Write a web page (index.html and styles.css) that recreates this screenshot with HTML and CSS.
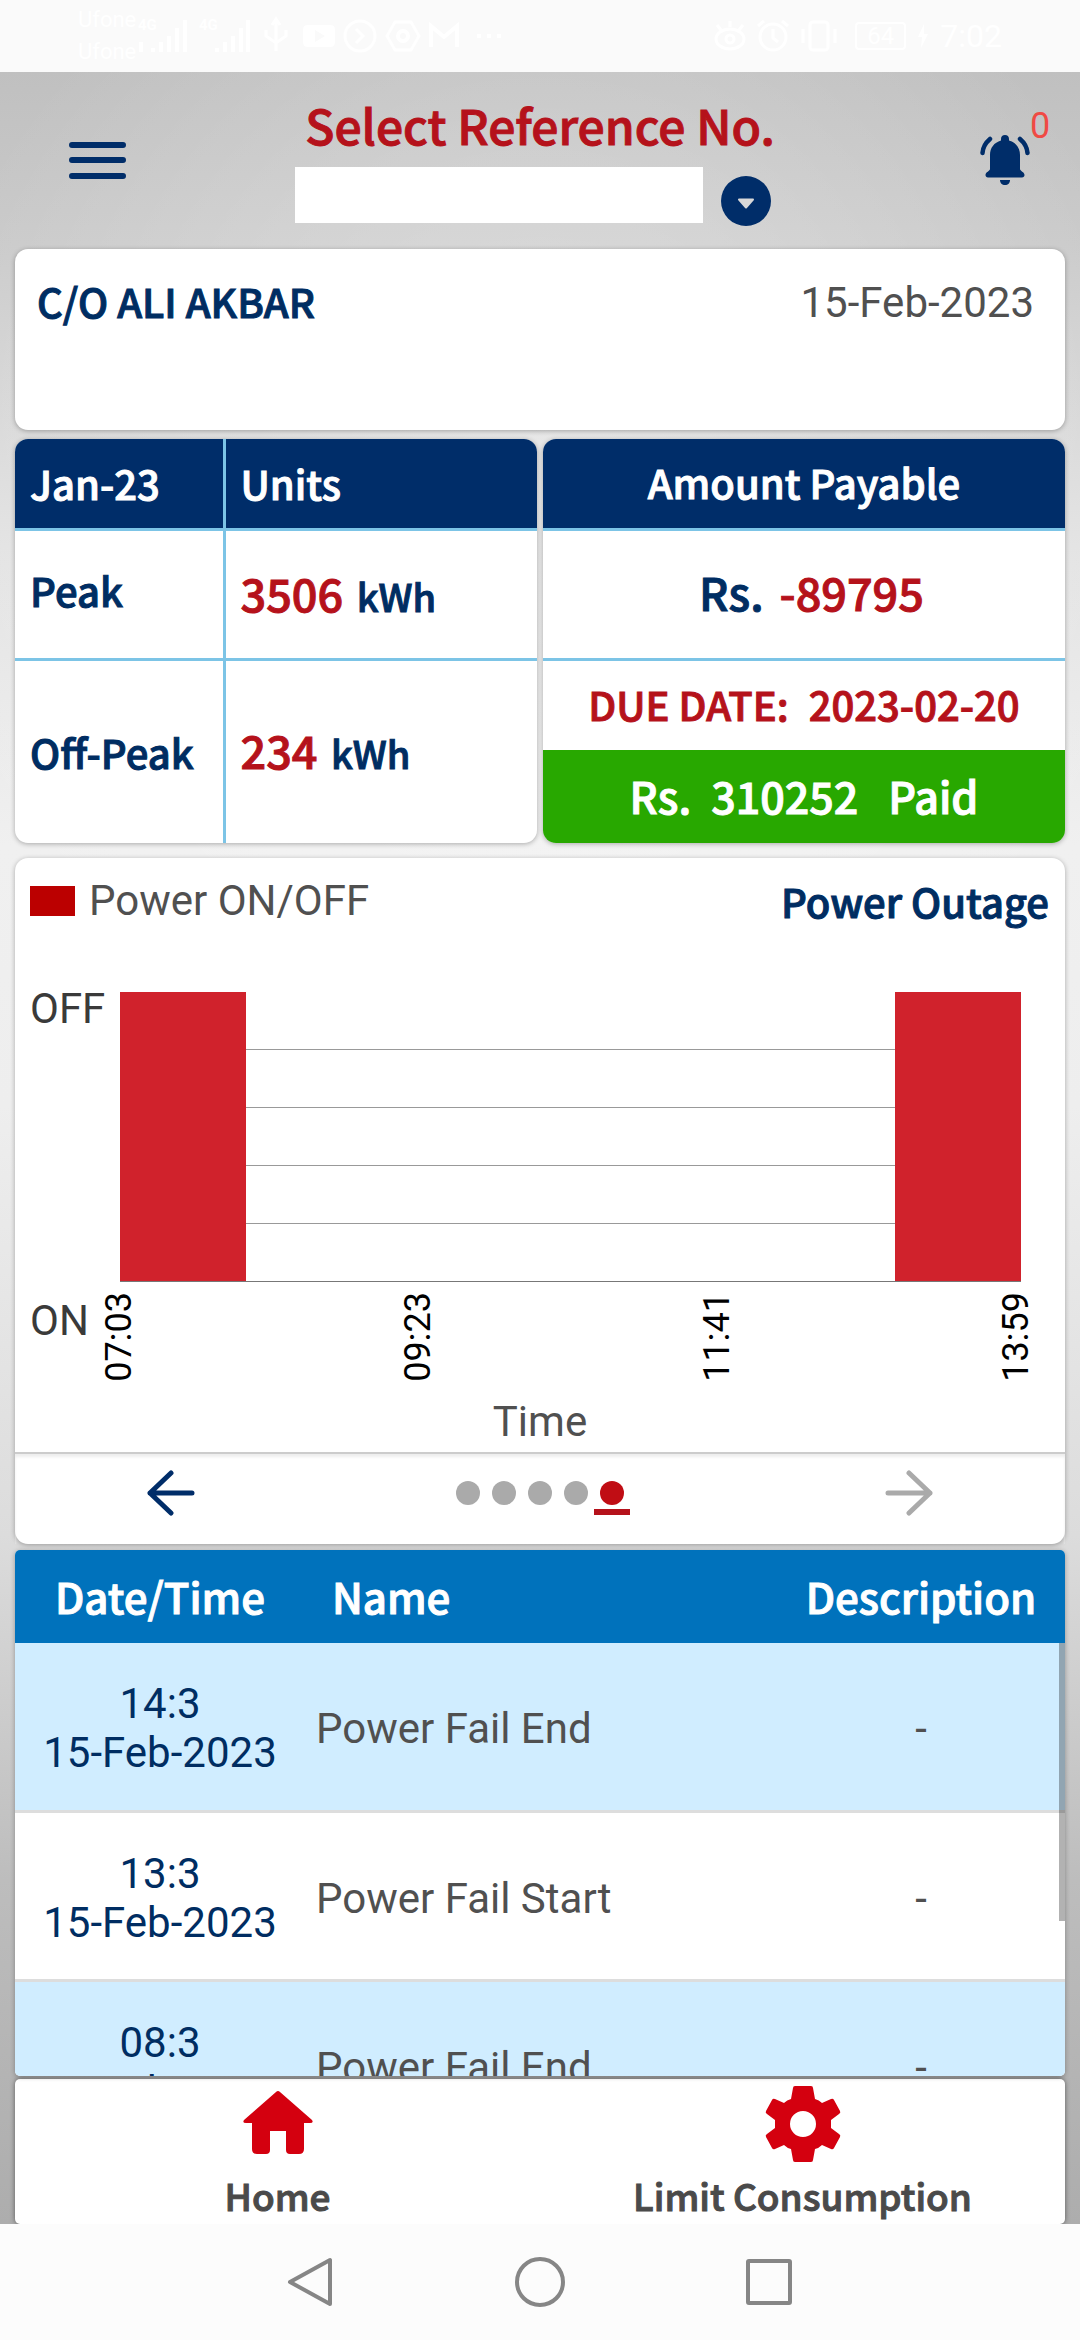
FILE: index.html
```html
<!DOCTYPE html>
<html lang="en">
<head>
    <meta charset="UTF-8">
    <meta name="viewport" content="width=device-width, initial-scale=1.0">
    <title>Power Outage</title>
    <link rel="stylesheet" href="styles.css">
</head>
<body>
    <div class="status-bar">
        <div class="status-left">
            <div class="carrier">Ufone<br>Ufone</div>
            <svg width="370" height="40" viewBox="0 0 370 40" fill="none" stroke="currentColor" stroke-width="4">
                <g fill="currentColor" stroke="none" font-size="15" font-weight="700">
                    <text x="2" y="14">4G</text>
                    <text x="63" y="14">4G</text>
                </g>
                <path d="M5 36V26M17 36v-4M25 36V26M33 36V20M41 36V12M49 36V4M81 36v-4M89 36V26M97 36V20M105 36V12M112 36V4"/>
                <path d="M140 35V6M136 9l4-6 4 6M130 14v6l10 7 10-7v-6" stroke-width="3"/>
                <path fill-rule="evenodd" stroke="none" fill="currentColor" d="M172 9h22q5 0 5 5v12q0 5-5 5h-22q-5 0-5-5V14q0-5 5-5zM179 14v12l10-6z"/>
                <circle cx="224" cy="20" r="15" stroke-width="3"/>
                <path d="M220 13l7 7-7 7" stroke-width="3"/>
                <path d="M259 6h16l8 14-8 14h-16l-8-14z" stroke-width="3"/>
                <circle cx="267" cy="20" r="5"/>
                <path d="M295 31V10l13 11 13-11v21"/>
                <path d="M341 20h4M351 20h4M361 20h4"/>
            </svg>
        </div>
        <div class="status-right">
            <svg width="130" height="34" viewBox="0 0 130 34" fill="none" stroke="currentColor" stroke-width="3">
                <ellipse cx="17" cy="20" rx="14" ry="10"/><circle cx="17" cy="20" r="4"/><path d="M4 6l4 5M17 2v6M30 6l-4 5"/>
                <circle cx="60" cy="18" r="13"/><path d="M60 10v9l5 4M45 7l6-5M75 7l-6-5"/>
                <rect x="97" y="3" width="18" height="28" rx="3"/><path d="M90 10v14M122 10v14"/>
            </svg>
            <span class="battery">64</span>
            <svg width="10" height="24" viewBox="0 0 10 24" fill="currentColor">
                <path d="M6 0L0 13h4L3 24l7-14H6z"/>
            </svg>
            <span>7:02</span>
        </div>
    </div>

    <div class="app">
        <header class="header">
            <button class="icon-btn menu-btn" aria-label="Menu">
                <svg width="57" height="38" viewBox="0 0 57 38" stroke="#002d69" stroke-width="6" stroke-linecap="round">
                    <path d="M3 4h51M3 19h51M3 35h51"/>
                </svg>
            </button>
            <div class="reference">
                <label class="reference-label" for="refNo">Select Reference No.</label>
                <div class="reference-field">
                    <select id="refNo" class="reference-select"><option value=""></option></select>
                    <button class="icon-btn drop-btn" aria-label="Open list">
                        <svg width="50" height="50" viewBox="0 0 50 50">
                            <circle cx="25" cy="25" r="25" fill="#002d69"/>
                            <path d="M18 23.500h14l-7 8z" fill="#d8d8d8" stroke="#d8d8d8" stroke-width="2" stroke-linejoin="round"/>
                        </svg>
                    </button>
                </div>
            </div>
            <button class="icon-btn bell-btn" aria-label="Notifications">
                <svg width="50" height="50" viewBox="0 0 50 50" fill="#002d69">
                    <path d="M25 0c-2.500 0-4 1.600-4 4v1.500C14 7.500 10 13 10 20v14c0 2-4.500 3-4.500 6 0 1.500 1 2.500 2.500 2.500h34c1.500 0 2.500-1 2.500-2.500 0-3-4.500-4-4.500-6V20c0-7-4-12.500-11-14.500V4c0-2.400-1.500-4-4-4z"/>
                    <path d="M20 45h10c0 3-2 5-5 5s-5-2-5-5z"/>
                    <path d="M10 4Q3 10 2.500 18M40 4q7 6 7.500 14" fill="none" stroke="#002d69" stroke-width="4.500" stroke-linecap="round"/>
                </svg>
                <span class="bell-count">0</span>
            </button>
        </header>

        <section class="card customer">
            <h1 class="customer-name">C/O ALI AKBAR</h1>
            <span class="customer-date">15-Feb-2023</span>
        </section>

        <div class="summary">
            <table class="card units">
                <thead>
                    <tr><th>Jan-23</th><th>Units</th></tr>
                </thead>
                <tbody>
                    <tr class="peak"><td>Peak</td><td><span class="value">3506</span> kWh</td></tr>
                    <tr><td>Off-Peak</td><td><span class="value">234</span> kWh</td></tr>
                </tbody>
            </table>
            <section class="card payable">
                <h2 class="payable-title">Amount Payable</h2>
                <div class="payable-amount"><span>Rs.</span><span class="red">-89795</span></div>
                <div class="payable-due"><span>DUE DATE:</span><span>2023-02-20</span></div>
                <div class="payable-paid"><span>Rs.</span><span>310252</span><span class="paid-state">Paid</span></div>
            </section>
        </div>

        <section class="card outage">
            <div class="outage-head">
                <span class="legend"><i class="legend-box"></i>Power ON/OFF</span>
                <h2 class="outage-title">Power Outage</h2>
            </div>
            <div class="chart">
                <div class="y-axis"><span>OFF</span><span>ON</span></div>
                <div class="plot-wrap">
                    <div class="plot">
                        <div class="bar"></div>
                        <div class="bar"></div>
                    </div>
                    <div class="x-axis">
                        <span>07:03</span>
                        <span>09:23</span>
                        <span>11:41</span>
                        <span>13:59</span>
                    </div>
                </div>
            </div>
            <div class="x-title">Time</div>
            <div class="pager">
                <button class="icon-btn" aria-label="Previous">
                    <svg width="48" height="46" viewBox="0 0 48 46" fill="none" stroke="#002d69" stroke-width="5" stroke-linecap="round" stroke-linejoin="round">
                        <path d="M45 23H3M24 3L3 23l21 20"/>
                    </svg>
                </button>
                <div class="dots">
                    <i class="dot"></i><i class="dot"></i><i class="dot"></i><i class="dot"></i><i class="dot active"></i>
                </div>
                <button class="icon-btn" aria-label="Next" disabled>
                    <svg width="48" height="46" viewBox="0 0 48 46" fill="none" stroke="#aaa" stroke-width="5" stroke-linecap="round" stroke-linejoin="round">
                        <path d="M3 23h42M24 3l21 20-21 20"/>
                    </svg>
                </button>
            </div>
        </section>

        <section class="log">
            <div class="log-scroll">
                <table class="log-table">
                    <thead>
                        <tr><th>Date/Time</th><th>Name</th><th>Description</th></tr>
                    </thead>
                    <tbody>
                        <tr><td>14:3<br>15-Feb-2023</td><td>Power Fail End</td><td>-</td></tr>
                        <tr><td>13:3<br>15-Feb-2023</td><td>Power Fail Start</td><td>-</td></tr>
                        <tr><td>08:3<br>15-Feb-2023</td><td>Power Fail End</td><td>-</td></tr>
                    </tbody>
                </table>
            </div>
            <div class="log-thumb"></div>
        </section>

        <nav class="tabs">
            <a href="#" class="tab">
                <svg width="76" height="76" viewBox="0 0 76 76" fill="#d4000f">
                    <path d="M36 6q2-2 4 0l32 28q2 3-2 3h-6v26q0 5-5 5H50q-4 0-4-4V45H30v19q0 4-4 4h-9q-5 0-5-5V37H6q-4 0-2-3z"/>
                </svg>
                Home
            </a>
            <a href="#" class="tab">
                <svg width="76" height="76" viewBox="0 0 76 76" fill="#d4000f" fill-rule="evenodd">
                    <path d="M30 0h16q2 0 2 2l2 11q4 1 7 4l9-4q2-1 3 1l6 11q1 2-1 3l-8 6v8l8 6q2 1 1 3l-6 11q-1 2-3 1l-9-4q-3 3-7 4l-2 11q0 2-2 2H30q-2 0-2-2l-2-11q-4-1-7-4l-9 4q-2 1-3-1L1 51q-1-2 1-3l8-6v-8l-8-6q-2-1-1-3l6-11q1-2 3-1l9 4q3-3 7-4l2-11q0-2 2-2zM38 25a13 13 0 1 0 0 26 13 13 0 0 0 0-26z"/>
                </svg>
                Limit Consumption
            </a>
        </nav>
    </div>

    <div class="system-nav">
        <button class="icon-btn" aria-label="Back">
            <svg width="50" height="50" viewBox="0 0 50 50" fill="none" stroke="#868686" stroke-width="4" stroke-linejoin="round">
                <path d="M44 3v44L4 25z"/>
            </svg>
        </button>
        <button class="icon-btn" aria-label="Home screen">
            <svg width="50" height="50" viewBox="0 0 50 50" fill="none" stroke="#868686" stroke-width="4">
                <circle cx="25" cy="25" r="23"/>
            </svg>
        </button>
        <button class="icon-btn" aria-label="Recent apps">
            <svg width="50" height="50" viewBox="0 0 50 50" fill="none" stroke="#868686" stroke-width="4" stroke-linejoin="round">
                <rect x="4" y="4" width="42" height="42" rx="1"/>
            </svg>
        </button>
    </div>
</body>
</html>
```

FILE: styles.css
```css
* {
    box-sizing: border-box;
}
body {
    margin: 0;
    height: 100vh;
    display: flex;
    flex-direction: column;
    font-family: "Noto Sans CJK SC", "Noto Sans", sans-serif;
    font-weight: 500;
    font-size: 40px;
    line-height: 50px;
    color: #002d62;
    -webkit-text-stroke: 1px;
}
h1, h2 {
    margin: 0;
    font-size: inherit;
    font-weight: inherit;
}
svg {
    display: block;
}
table {
    border-collapse: collapse;
}
.icon-btn {
    padding: 0;
    border: none;
    background: none;
    cursor: pointer;
}
.red {
    color: #b5121b;
}

/* Plain Roboto text */
.status-bar, .bell-count, .customer-date, .legend, .y-axis, .x-axis, .x-title, .log-table td {
    font-family: Roboto, sans-serif;
    font-weight: 400;
    -webkit-text-stroke: 0;
}

/* Status bar */
.status-bar {
    height: 72px;
    flex: none;
    display: flex;
    align-items: center;
    justify-content: space-between;
    padding: 0 78px;
    background: #fafafa;
    color: #fff;
    font-size: 32px;
}
.status-left, .status-right {
    display: flex;
    align-items: center;
}
.status-right {
    gap: 12px;
}
.carrier {
    font-size: 22px;
    line-height: 32px;
}
.battery {
    padding: 0 10px;
    border: 2px solid #fff;
    border-radius: 4px;
    font-size: 24px;
    line-height: 24px;
}

/* App area */
.app {
    flex: 1;
    min-height: 0;
    display: flex;
    flex-direction: column;
    padding: 0 15px;
    background:
        radial-gradient(ellipse 60% 30% at 50% 20%, rgba(255, 255, 255, 0.4), rgba(255, 255, 255, 0)),
        linear-gradient(#c0c0c0 0%, #cacaca 8%, #e2e2e2 22%, #f0f0f0 36%, #eee 48%, #dcdcdc 68%, #bdbdbd 84%, #adadad 100%);
}
.card {
    background: #fff;
    border-radius: 13px;
    box-shadow: 0 1px 5px rgba(0, 0, 0, 0.3);
}

.header {
    display: grid;
    grid-template-columns: 1fr 490px 1fr;
    align-items: center;
    padding: 22px 35px 23px;
}
.menu-btn {
    justify-self: start;
    margin-left: 19px;
}
.reference-label {
    display: block;
    margin-bottom: 13px;
    font-size: 48px;
    line-height: 60px;
    text-align: center;
    color: #b5121b;
}
.reference-field {
    display: flex;
    gap: 18px;
    height: 59px;
}
.reference-select {
    appearance: none;
    width: 408px;
    height: 56px;
    border: none;
    border-radius: 0;
    background: #fff;
}
.drop-btn {
    align-self: flex-end;
}
.bell-btn {
    position: relative;
    justify-self: end;
}
.bell-count {
    position: absolute;
    left: 50px;
    top: -30px;
    font-size: 36px;
    line-height: 42px;
    color: #f04a44;
}

.customer {
    display: flex;
    justify-content: space-between;
    height: 181px;
    padding: 27px 31px 0 22px;
}
.customer-date {
    font-size: 42px;
    line-height: 54px;
    color: #505050;
}

/* Bill summary */
.summary {
    display: grid;
    grid-template-columns: 1fr 1fr;
    gap: 6px;
    margin: 9px 0 15px;
}
.units {
    width: 100%;
    height: 404px;
    overflow: hidden;
    text-align: left;
}
.units th, .units td {
    padding: 0 15px;
    font-weight: 500;
    border-bottom: 3px solid #7cc4e6;
}
.units th:first-child, .units td:first-child {
    width: 209px;
    border-right: 3px solid #7cc4e6;
}
.units th {
    height: 90px;
    background: #002d69;
    color: #fff;
}
.units td:last-child {
    font-size: 38px;
}
.peak {
    height: 130px;
}
.units .peak td:first-child {
    padding-bottom: 8px;
}
.units tr:last-child td {
    border-bottom: none;
}
.value {
    margin-right: 5px;
    font-size: 45px;
    color: #b5121b;
}
.payable {
    display: flex;
    flex-direction: column;
    overflow: hidden;
    text-align: center;
}
.payable-title {
    padding: 18px 0 21px;
    background: #002d69;
    color: #fff;
    border-bottom: 3px solid #7cc4e6;
}
.payable-amount, .payable-due, .payable-paid {
    display: flex;
    justify-content: center;
    gap: 20px;
}
.payable-amount {
    gap: 16px;
    padding: 36px 0 41px 15px;
    font-size: 45px;
    border-bottom: 3px solid #7cc4e6;
}
.payable-due {
    padding: 18px 0 21px;
    color: #b5121b;
}
.payable-paid {
    flex: 1;
    padding-top: 20px;
    font-size: 43px;
    background: #28a800;
    color: #fff;
}
.paid-state {
    margin-left: 10px;
}

/* Outage chart */
.outage {
    display: flex;
    flex-direction: column;
}
.outage-head {
    display: flex;
    justify-content: space-between;
    align-items: center;
    padding: 16px 16px 0 15px;
}
.legend, .y-axis, .x-title {
    font-size: 42px;
    line-height: 54px;
    color: #505050;
}
.legend {
    display: flex;
    align-items: center;
    gap: 14px;
}
.legend-box {
    width: 45px;
    height: 30px;
    background: #bb0000;
}
.chart {
    display: flex;
    padding: 54px 44px 0 15px;
}
.y-axis {
    display: flex;
    flex-direction: column;
    justify-content: space-between;
    width: 90px;
    height: 366px;
    color: #3a3a3a;
}
.plot-wrap {
    flex: 1;
    padding-top: 10px;
}
.plot {
    display: flex;
    justify-content: space-between;
    height: 290px;
    background: repeating-linear-gradient(transparent 0 57px, #999 57px 58px);
    border-bottom: 1px solid #777;
}
.bar {
    width: 14%;
    background: #d0222c;
}
.x-axis {
    display: flex;
    justify-content: space-between;
    margin: 10px -15px 0 -21px;
}
.x-axis span {
    writing-mode: vertical-rl;
    transform: rotate(180deg);
    font-size: 36px;
    line-height: 40px;
    color: #000;
}
.x-title {
    padding: 13px 0 3px;
    text-align: center;
}
.pager {
    display: flex;
    align-items: center;
    justify-content: space-between;
    height: 92px;
    padding: 0 132px 11px;
    border-top: 2px solid #ccc;
    box-shadow: inset 0 3px 3px #eee;
}
.dots {
    display: flex;
    gap: 12px;
}
.dot {
    position: relative;
    width: 24px;
    height: 24px;
    border-radius: 50%;
    background: #aaa;
}
.dot.active {
    background: #c00d14;
}
.dot.active::after {
    content: "";
    position: absolute;
    left: -6px;
    top: 28px;
    width: 36px;
    height: 6px;
    background: #b5121b;
}

/* Event log */
.log {
    position: relative;
    flex: 1;
    min-height: 0;
    margin: 6px 0 3px;
    border-radius: 5px;
    overflow: hidden;
    background: #fff;
    box-shadow: 0 1px 5px rgba(0, 0, 0, 0.3);
}
.log-scroll {
    height: 100%;
    overflow-y: auto;
    scrollbar-width: none;
}
.log-table {
    width: 100%;
    table-layout: fixed;
    font-size: 42px;
}
.log-table th {
    position: sticky;
    top: 0;
    height: 93px;
    padding: 0;
    font-weight: 500;
    background: #0072bc;
    color: #fff;
}
.log-table th:first-child {
    width: 290px;
}
.log-table th:nth-child(2) {
    padding-left: 27px;
    text-align: left;
}
.log-table th:last-child {
    width: 288px;
}
.log-table td {
    height: 169px;
    padding: 4px 0 0;
    border-bottom: 3px solid #ddd;
    line-height: 49px;
    color: #505050;
    text-align: center;
}
.log-table td:first-child {
    color: #002d62;
}
.log-table td:nth-child(2) {
    padding-left: 11px;
    text-align: left;
}
.log-table tbody tr:nth-child(odd) {
    background: #d0edff;
}
.log-thumb {
    position: absolute;
    top: 93px;
    right: 0;
    width: 6px;
    height: 278px;
    background: rgba(0, 0, 0, 0.3);
}

/* Bottom tabs */
.tabs {
    display: grid;
    grid-template-columns: 1fr 1fr;
    padding: 7px 0 4px;
    background: #fff;
    border-radius: 5px;
    box-shadow: 0 0 5px rgba(0, 0, 0, 0.5);
}
.tab {
    display: flex;
    flex-direction: column;
    align-items: center;
    gap: 8px;
    font-size: 37px;
    color: #4a4a4a;
    text-decoration: none;
}
.system-nav {
    flex: none;
    display: flex;
    align-items: center;
    justify-content: center;
    gap: 179px;
    height: 116px;
    background: #fcfcfc;
}
```
